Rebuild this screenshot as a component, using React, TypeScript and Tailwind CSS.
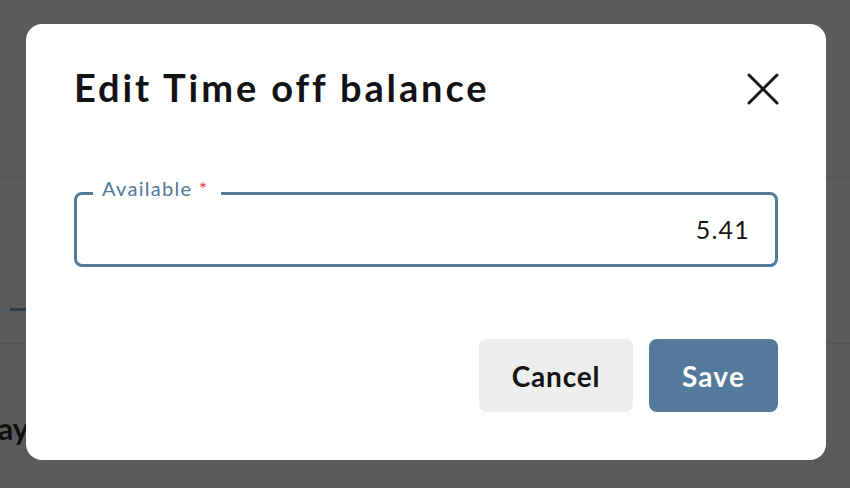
import { useState } from 'react';

function CloseIcon() {
  return (
    <svg width="32" height="32" viewBox="0 0 32 32" fill="none" stroke="#161616" strokeWidth="3" strokeLinecap="round">
      <path d="M2 2 30 30" />
      <path d="M30 2 2 30" />
    </svg>
  );
}

export default function App() {
  const [value, setValue] = useState('5.41');

  return (
    <div className="relative h-[488px] w-[850px] overflow-hidden bg-[#5b5b5c] font-['Lato','Open_Sans',sans-serif]">
      {/* page behind the dialog, already dimmed */}
      <div className="h-[178px] border-b border-[#525253]" />
      <div className="flex h-[166px] flex-col justify-end border-b border-[#525253] pb-[32px]">
        <div className="ml-[10px] h-[3px] w-[80px] bg-[#2e3b4b]" />
      </div>
      <div className="-ml-[2px] pt-[66px] text-[30px] font-bold leading-[36px] text-[#111]">ay</div>

      {/* dialog */}
      <div className="absolute inset-0 pt-[24px] pl-[26px]">
        <div className="flex h-[436px] w-[800px] flex-col rounded-[16px] bg-white px-12 pt-[40px] pb-12">
          <div className="flex items-start justify-between">
            <h2 className="text-[38px] font-bold leading-[46px] tracking-[2.9px] text-[#131316]">
              Edit Time off balance
            </h2>
            <button className="mt-[9px] mr-[-1px]">
              <CloseIcon />
            </button>
          </div>

          <div className="relative mt-[82px] flex h-[75px] items-center rounded-[8px] border-[3px] border-[#527a9b] pr-[25px]">
            <span className="absolute -top-[18px] left-[16px] bg-white pl-[9px] pr-[12px] text-[20px] leading-[22px] tracking-[1.3px] text-[#527a9b]">
              Available <span className="text-[#e5483a]">*</span>
            </span>
            <input
              value={value}
              onChange={(e) => setValue(e.target.value)}
              className="w-full bg-transparent text-right text-[25px] tracking-[1.2px] text-[#141414] outline-none"
            />
          </div>

          <div className="mt-[72px] flex justify-end gap-4">
            <button className="h-[73px] w-[154px] rounded-[8px] bg-[#eeeeee] text-[28px] font-bold tracking-[0.8px] text-[#141414]">
              Cancel
            </button>
            <button className="h-[73px] w-[129px] rounded-[8px] bg-[#537a9b] text-[28px] font-bold tracking-[1.2px] text-white">
              Save
            </button>
          </div>
        </div>
      </div>
    </div>
  );
}
